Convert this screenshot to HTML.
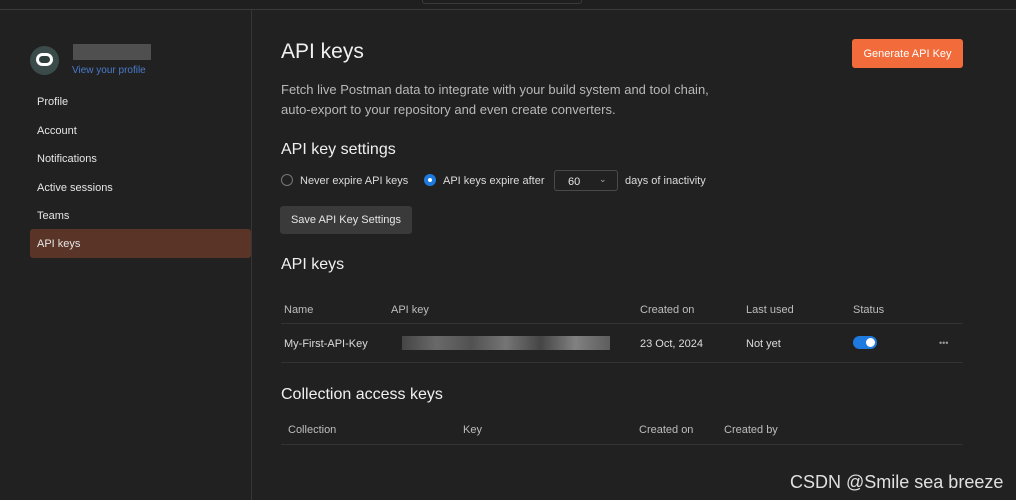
<!DOCTYPE html>
<html><head><meta charset="utf-8"><style>
*{box-sizing:border-box;margin:0;padding:0}
body{width:1016px;height:500px;background:#212121;font-family:"Liberation Sans",sans-serif;color:#e6e6e6;position:relative;overflow:hidden}
.abs{position:absolute}
.top{left:0;top:0;width:1016px;height:10px;background:#1f1f1f;border-bottom:1px solid #3a3a3a}
.topbox{left:422px;top:-2px;width:160px;height:6px;border:1px solid #3a3a3a;border-radius:3px}
.side{left:251px;top:10px;width:1px;height:490px;background:#363636}
.nav{left:37px;font-size:11px;color:#e6e6e6}
.sel{left:30px;top:229px;width:221px;height:29px;background:#5a3427;border-radius:3px}
h1{position:absolute;left:281px;top:40px;font-size:21px;font-weight:normal;color:#f0f0f0}
h2{position:absolute;left:281px;font-size:16px;font-weight:normal;color:#f0f0f0}
.p{left:281px;top:80px;font-size:13px;line-height:20px;color:#b8b8b8}
.btn{left:852px;top:39px;width:111px;height:29px;background:#f26b3a;border-radius:3px;color:#fff;font-size:11px;text-align:center;line-height:29px}
.sm{font-size:11px;color:#dcdcdc}
.th{font-size:11px;color:#bdbdbd}
.line{height:1px;background:#333;left:281px;width:682px}
</style></head><body>
<div class="abs top"></div><div class="abs topbox"></div>
<div class="abs side"></div>
<div class="abs" style="left:30px;top:46px;width:29px;height:29px;border-radius:50%;background:#3b4b4a"></div>
<div class="abs" style="left:36px;top:53px;width:17px;height:13px;border-radius:7px;background:#fff"></div>
<div class="abs" style="left:39px;top:56px;width:11px;height:7px;border-radius:4px;background:#2f3d3c"></div>
<div class="abs" style="left:73px;top:44px;width:78px;height:16px;background:#5b5b5b;opacity:.8"></div>
<div class="abs" style="left:72px;top:65px;font-size:10px;color:#4a7bcc">View your profile</div>
<div class="abs sel"></div>
<div class="abs nav" style="top:96px">Profile</div>
<div class="abs nav" style="top:125px">Account</div>
<div class="abs nav" style="top:153px">Notifications</div>
<div class="abs nav" style="top:182px">Active sessions</div>
<div class="abs nav" style="top:210px">Teams</div>
<div class="abs nav" style="top:238px">API keys</div>
<h1>API keys</h1>
<div class="abs btn" style="line-height:30px">Generate API Key</div>
<div class="abs p">Fetch live Postman data to integrate with your build system and tool chain,<br>auto-export to your repository and even create converters.</div>
<h2 style="top:141px">API key settings</h2>
<div class="abs" style="left:281px;top:174px;width:12px;height:12px;border:1px solid #777;border-radius:50%"></div>
<div class="abs sm" style="left:300px;top:175px">Never expire API keys</div>
<div class="abs" style="left:424px;top:174px;width:12px;height:12px;border-radius:50%;background:#1f7ae0"><div style="margin:4px;width:4px;height:4px;border-radius:50%;background:#fff"></div></div>
<div class="abs sm" style="left:443px;top:175px">API keys expire after</div>
<div class="abs" style="left:554px;top:170px;width:64px;height:21px;border:1px solid #4a4a4a;border-radius:3px;font-size:11px;padding:5px 0 0 13px">60<span style="position:absolute;left:44px;top:3px;font-size:9px;color:#aaa">⌄</span></div>
<div class="abs sm" style="left:625px;top:175px">days of inactivity</div>
<div class="abs" style="left:280px;top:206px;width:132px;height:28px;background:#3a3a3a;border-radius:3px;font-size:11px;color:#e6e6e6;text-align:center;line-height:29px">Save API Key Settings</div>
<h2 style="top:256px">API keys</h2>
<div class="abs th" style="left:284px;top:304px">Name</div>
<div class="abs th" style="left:391px;top:304px">API key</div>
<div class="abs th" style="left:640px;top:304px">Created on</div>
<div class="abs th" style="left:746px;top:304px">Last used</div>
<div class="abs th" style="left:853px;top:304px">Status</div>
<div class="abs line" style="top:323px"></div>
<div class="abs sm" style="left:284px;top:338px">My-First-API-Key</div>
<div class="abs" style="left:402px;top:336px;width:208px;height:14px;background:linear-gradient(90deg,#555,#888,#666,#999,#555,#aaa,#777);opacity:.7"></div>
<div class="abs sm" style="left:640px;top:338px">23 Oct, 2024</div>
<div class="abs sm" style="left:746px;top:338px">Not yet</div>
<div class="abs" style="left:853px;top:336px;width:24px;height:13px;border-radius:7px;background:#1f7ae0"><div style="position:absolute;left:13px;top:2px;width:9px;height:9px;border-radius:50%;background:#fff"></div></div>
<div class="abs" style="left:939px;top:338px;font-size:9px;color:#999">•••</div>
<div class="abs line" style="top:362px"></div>
<h2 style="top:386px">Collection access keys</h2>
<div class="abs th" style="left:288px;top:424px">Collection</div>
<div class="abs th" style="left:463px;top:424px">Key</div>
<div class="abs th" style="left:639px;top:424px">Created on</div>
<div class="abs th" style="left:724px;top:424px">Created by</div>
<div class="abs line" style="top:444px"></div>
<div class="abs" style="left:790px;top:472px;font-size:18px;color:#e0e0e0;white-space:nowrap">CSDN @Smile sea breeze</div>
</body></html>
